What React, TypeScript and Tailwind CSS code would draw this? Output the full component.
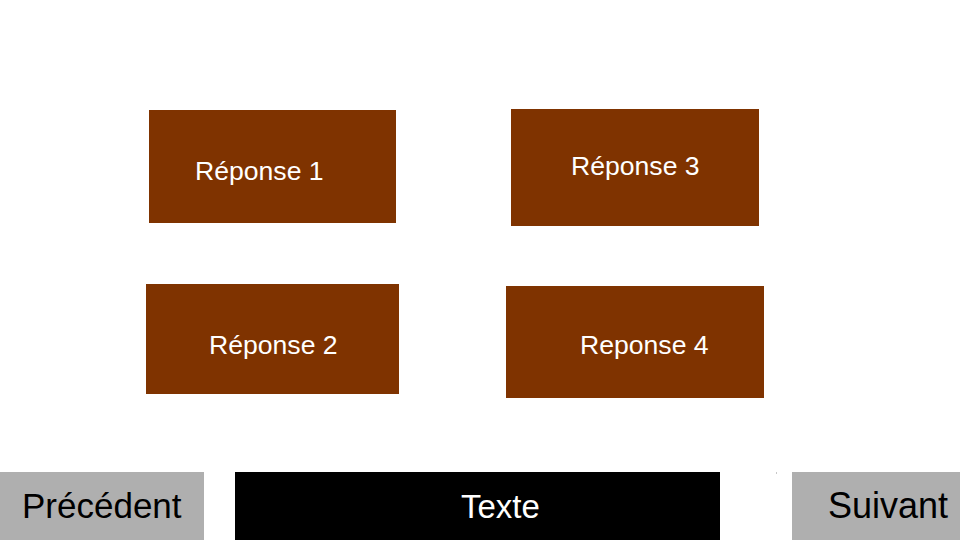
import React from "react";

const font = { fontFamily: '"Liberation Sans", Arial, sans-serif' };

export default function App() {
  return (
    <div className="w-[960px] h-[540px] bg-white flex flex-col overflow-hidden" style={font}>
      {/* Row 1 */}
      <div className="flex items-start pt-[109px]">
        <div className="ml-[149px] mt-[1px] w-[247px] h-[113px] bg-[#7f3300] pl-[46px] pt-[48px] text-white text-[26.6px] leading-none whitespace-nowrap">
          Réponse 1
        </div>
        <div className="ml-[115px] w-[248px] h-[117px] bg-[#7f3300] pl-[60px] pt-[44px] text-white text-[26.6px] leading-none whitespace-nowrap">
          Réponse 3
        </div>
      </div>
      {/* Row 2 */}
      <div className="flex items-start mt-[58px]">
        <div className="ml-[146px] w-[253px] h-[110px] bg-[#7f3300] pl-[63px] pt-[48px] text-white text-[26.6px] leading-none whitespace-nowrap">
          Réponse 2
        </div>
        <div className="ml-[107px] mt-[2px] w-[258px] h-[112px] bg-[#7f3300] pl-[74px] pt-[46px] text-white text-[26.6px] leading-none whitespace-nowrap">
          Reponse 4
        </div>
      </div>
      {/* Bottom bar */}
      <div className="mt-auto h-[68px] flex items-start">
        <div className="w-[204px] h-[68px] bg-[#afafaf] pl-[22px] pt-[16px] text-black text-[35px] leading-none whitespace-nowrap">
          Précédent
        </div>
        <div className="ml-[31px] w-[485px] h-[68px] bg-black pl-[226px] pt-[18px] text-white text-[33px] leading-none whitespace-nowrap">
          Texte
        </div>
        <div className="ml-[56px] w-[1px] h-[2px] bg-[#c8c8c8]" />
        <div className="ml-[15px] w-[168px] h-[68px] bg-[#afafaf] pl-[36px] pt-[16px] text-black text-[36px] leading-none whitespace-nowrap">
          Suivant
        </div>
      </div>
    </div>
  );
}
